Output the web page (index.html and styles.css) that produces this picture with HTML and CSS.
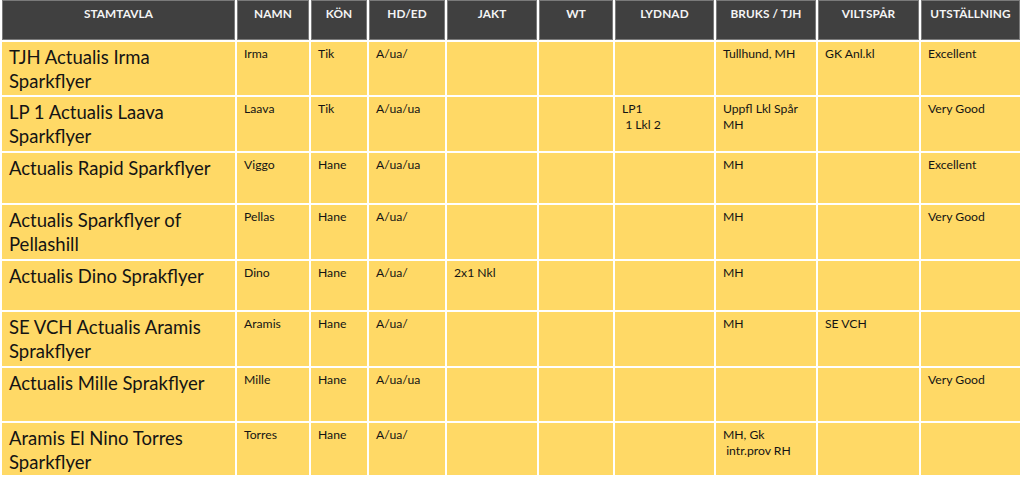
FILE: index.html
```html
<!DOCTYPE html>
<html lang="sv">
<head>
<meta charset="utf-8">
<title>Stamtavla</title>
<link rel="stylesheet" href="styles.css">
</head>
<body>
<table class="pedigree">
  <colgroup>
    <col class="c-name"><col class="c-namn"><col class="c-kon"><col class="c-hd"><col class="c-jakt"><col class="c-wt"><col class="c-lyd"><col class="c-bruks"><col class="c-vilt"><col class="c-utst">
  </colgroup>
  <thead>
    <tr class="head">
      <th>STAMTAVLA</th><th>NAMN</th><th>KÖN</th><th>HD/ED</th><th>JAKT</th><th>WT</th><th>LYDNAD</th><th>BRUKS / TJH</th><th>VILTSPÅR</th><th>UTSTÄLLNING</th>
    </tr>
  </thead>
  <tbody>
    <tr class="r1">
      <td class="big">TJH Actualis Irma Sparkflyer</td><td>Irma</td><td>Tik</td><td>A/ua/</td><td></td><td></td><td></td><td>Tullhund, MH</td><td>GK Anl.kl</td><td>Excellent</td>
    </tr>
    <tr class="r2">
      <td class="big">LP 1 Actualis Laava Sparkflyer</td><td>Laava</td><td>Tik</td><td>A/ua/ua</td><td></td><td></td><td class="pre">LP1
 1 Lkl 2</td><td>Uppfl Lkl Spår MH</td><td></td><td>Very Good</td>
    </tr>
    <tr class="r3">
      <td class="big">Actualis Rapid Sparkflyer</td><td>Viggo</td><td>Hane</td><td>A/ua/ua</td><td></td><td></td><td></td><td>MH</td><td></td><td>Excellent</td>
    </tr>
    <tr class="r4">
      <td class="big">Actualis Sparkflyer of Pellashill</td><td>Pellas</td><td>Hane</td><td>A/ua/</td><td></td><td></td><td></td><td>MH</td><td></td><td>Very Good</td>
    </tr>
    <tr class="r5">
      <td class="big">Actualis Dino Sprakflyer</td><td>Dino</td><td>Hane</td><td>A/ua/</td><td>2x1 Nkl</td><td></td><td></td><td>MH</td><td></td><td></td>
    </tr>
    <tr class="r6">
      <td class="big">SE VCH Actualis Aramis Sprakflyer</td><td>Aramis</td><td>Hane</td><td>A/ua/</td><td></td><td></td><td></td><td>MH</td><td>SE VCH</td><td></td>
    </tr>
    <tr class="r7">
      <td class="big">Actualis Mille Sprakflyer</td><td>Mille</td><td>Hane</td><td>A/ua/ua</td><td></td><td></td><td></td><td></td><td></td><td>Very Good</td>
    </tr>
    <tr class="r8">
      <td class="big">Aramis El Nino Torres Sparkflyer</td><td>Torres</td><td>Hane</td><td>A/ua/</td><td></td><td></td><td></td><td class="pre">MH, Gk
 intr.prov RH</td><td></td><td></td>
    </tr>
  </tbody>
</table>
</body>
</html>
```

FILE: styles.css
```css
html, body {
  margin: 0;
  padding: 0;
  background: #ffffff;
}

body {
  font-family: Lato, "Open Sans", "Liberation Sans", sans-serif;
  color: #141414;
}

.pedigree {
  table-layout: fixed;
  border-collapse: separate;
  border-spacing: 2px;
  margin: -2px 0 0 0;
  width: 1022px;
}

.c-name { width: 233px; }
.c-namn { width: 72px; }
.c-kon { width: 56px; }
.c-hd { width: 76px; }
.c-jakt { width: 90px; }
.c-wt { width: 74px; }
.c-lyd { width: 99px; }
.c-bruks { width: 100px; }
.c-vilt { width: 101px; }
.c-utst { width: 99px; }

.head th {
  height: 40px;
  box-sizing: border-box;
  padding: 6px 2px 0;
  vertical-align: top;
  background: #404040;
  box-shadow: inset 0 0 0 1px #7a7a7a;
  color: #f4f4f4;
  font-size: 11.8px;
  font-weight: 700;
  text-align: center;
  letter-spacing: 0.1px;
}

.pedigree td {
  background: #ffd966;
  vertical-align: top;
  padding: 4px 6px 0 7px;
  font-size: 12.2px;
  line-height: 16px;
  box-sizing: border-box;
}

.pedigree td.big {
  font-size: 18.5px;
  line-height: 24px;
  padding: 3px 6px 0 7px;
}

.pedigree td.pre {
  white-space: pre-wrap;
}

.r1 td { height: 53px; }
.r2 td { height: 54px; }
.r3 td { height: 50px; }
.r4 td { height: 54px; }
.r5 td { height: 49px; }
.r6 td { height: 54px; }
.r7 td { height: 53px; }
.r8 td { height: 52px; }
```
